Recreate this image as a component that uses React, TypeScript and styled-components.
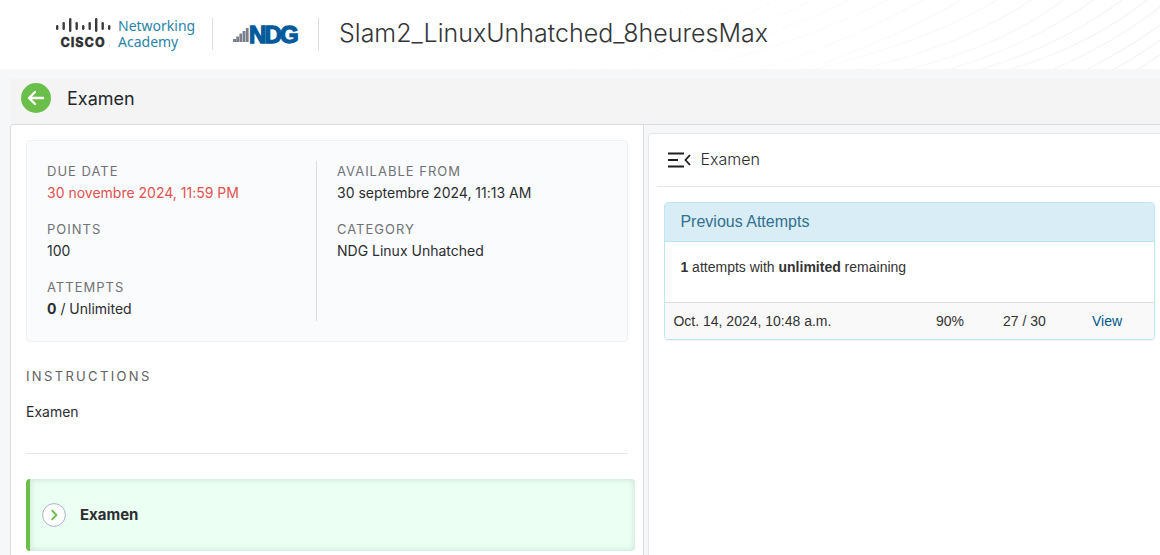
import React from "react";
import styled, { createGlobalStyle } from "styled-components";

const sans = `Inter, "Liberation Sans", sans-serif`;
const arial = `"Liberation Sans", Arial, sans-serif`;

const GlobalStyle = createGlobalStyle`
  *, *::before, *::after { box-sizing: border-box; }
  html, body { margin: 0; background: #f5f7f9; }
  body {
    font-family: ${sans};
    font-size: 14px;
    font-feature-settings: "calt" 0;
    color: #2b2d31;
  }
  h1, h2, h3, p, dl, dd { margin: 0; }
`;

const Page = styled.div`
  display: flex;
  flex-direction: column;
  min-height: 100vh;
  overflow: hidden;
`;

const Header = styled.header`
  position: relative;
  display: flex;
  align-items: center;
  height: 69px;
  padding: 0 0 2px 55px;
  background: #fff;
  overflow: hidden;
`;

const Waves = styled.svg`
  position: absolute;
  top: 0;
  right: 0;
`;

const BrandLink = styled.a`
  position: relative;
  display: flex;
  align-items: center;
  text-decoration: none;
`;

const AcademyName = styled.span`
  width: 88px;
  margin-left: 6px;
  padding-right: 8px;
  font: 400 14px/16px "Noto Sans", sans-serif;
  color: #2a84a8;
`;

const Separator = styled.span<{ $start: number }>`
  position: relative;
  width: 1px;
  height: 32px;
  margin: 0 20px 0 ${(p) => p.$start}px;
  background: #dcdde0;
`;

const CourseTitle = styled.h1`
  position: relative;
  padding-bottom: 2px;
  font-size: 25px;
  line-height: 32px;
  font-weight: 300;
  color: #343537;
`;

const Main = styled.main`
  display: flex;
  flex-direction: column;
  flex: 1;
  padding: 10px 0 0 10px;
`;

const TitleBar = styled.div`
  display: flex;
  align-items: center;
  gap: 16px;
  height: 45px;
  padding: 0 11px 7px;
  background: #f4f4f4;
`;

const BackButton = styled.button`
  display: flex;
  width: 30px;
  height: 30px;
  padding: 0;
  border: 0;
  border-radius: 50%;
  background: #6abf4b;
  cursor: pointer;
`;

const BarTitle = styled.h2`
  padding-top: 2px;
  font-size: 18px;
  line-height: 24px;
  font-weight: 400;
  color: #24272b;
`;

const Workspace = styled.div`
  display: grid;
  grid-template-columns: 317fr 256fr;
  gap: 4px;
  flex: 1;
  border: solid #dadbdd;
  border-width: 1px 0 0 1px;
  border-top-left-radius: 4px;
  overflow: hidden;
`;

const DetailsPane = styled.section`
  padding: 15px 8px 4px 15px;
  border-right: 1px solid #dadbdd;
  background: #fff;
`;

const Summary = styled.div`
  display: grid;
  grid-template-columns: 270px 1fr;
  margin-right: 7px;
  padding: 20px;
  border: 1px solid #f0f1f3;
  border-radius: 4px;
  background: #fafbfd;
`;

const FactList = styled.dl<{ $ruled?: boolean }>`
  display: flex;
  flex-direction: column;
  gap: 14px;
  height: 160px;
  padding-left: ${(p) => (p.$ruled ? 20 : 0)}px;
  border-right: ${(p) => (p.$ruled ? "0" : "1px solid #dcdde0")};
`;

const FactLabel = styled.dt`
  font-size: 13px;
  line-height: 20px;
  letter-spacing: 1px;
  text-transform: uppercase;
  color: #707276;
`;

const FactValue = styled.dd<{ $late?: boolean }>`
  line-height: 24px;
  color: ${(p) => (p.$late ? "#e0524f" : "#2b2d31")};
`;

const SectionLabel = styled.h3`
  margin-top: 24px;
  font-size: 13px;
  line-height: 20px;
  font-weight: 400;
  letter-spacing: 0.18em;
  text-transform: uppercase;
  color: #5f6165;
`;

const Instructions = styled.p`
  margin: 16px 7px 25px 0;
  padding-bottom: 31px;
  border-bottom: 1px solid #e4e5e7;
  line-height: 20px;
`;

const TaskRow = styled.button`
  display: flex;
  align-items: center;
  gap: 14px;
  width: 100%;
  height: 72px;
  padding: 0 12px;
  border: 0;
  border-left: 4px solid #6abf4b;
  border-radius: 4px;
  background: #ebfff3;
  box-shadow: inset 0 0 6px rgba(60, 100, 90, 0.22);
  font: 700 15px/20px ${sans};
  color: #2b2d31;
  text-align: left;
  cursor: pointer;
`;

const AttemptsPane = styled.section`
  margin-top: 8px;
  border: solid #e4e6e8;
  border-width: 1px 0 0 1px;
  border-top-left-radius: 4px;
  background: #fff;
`;

const PaneHead = styled.div`
  display: flex;
  align-items: center;
  gap: 9px;
  height: 53px;
  margin-left: 8px;
  padding-left: 11px;
  border-bottom: 1px solid #e4e5e7;
`;

const MenuButton = styled.button`
  display: flex;
  padding: 0;
  border: 0;
  background: none;
  cursor: pointer;
`;

const PaneTitle = styled.h2`
  padding-bottom: 2px;
  font-size: 16px;
  line-height: 24px;
  font-weight: 300;
  color: #2b2d31;
`;

const Card = styled.div`
  margin: 15px 5px 0 15px;
  border: 1px solid #bce8f1;
  border-radius: 4px;
  box-shadow: 0 1px 1px rgba(0, 0, 0, 0.05);
  overflow: hidden;
  font-family: ${arial};
  color: #333;
`;

const CardTitle = styled.h3`
  padding: 9px 15px;
  border-bottom: 1px solid #bce8f1;
  background: #d9edf7;
  font-size: 16px;
  line-height: 20px;
  font-weight: 400;
  color: #31708f;
`;

const CardText = styled.p`
  padding: 15px 15px 25px;
  line-height: 20px;
`;

const AttemptTable = styled.table`
  width: 100%;
  table-layout: fixed;
  border-collapse: collapse;
  border-top: 1px solid #ddd;
  background: #f9f9f9;

  td {
    height: 36px;
    padding: 8px;
    line-height: 20px;
    white-space: nowrap;
  }
`;

const Column = styled.col<{ $width?: number }>`
  width: ${(p) => (p.$width ? `${p.$width}px` : "auto")};
`;

const ViewLink = styled.a`
  color: #00568f;
  text-decoration: none;
`;

const ciscoBars = [2, 1, 0, 1, 2, 1, 0, 1, 2];
const barShapes = [
  { y: 1, h: 14 },
  { y: 5, h: 8 },
  { y: 8, h: 5 },
];

const CiscoLogo = () => (
  <svg width="57" height="34" viewBox="0 0 57 34" role="img" aria-label="Cisco">
    {ciscoBars.map((kind, i) => (
      <rect key={i} x={1 + i * 6.5} y={barShapes[kind].y} width="2.4" height={barShapes[kind].h} rx="1.2" fill="#3a3b3e" />
    ))}
    <text x="5.5" y="29.5" fontFamily="Inter, sans-serif" fontSize="12.5" fontWeight="800" letterSpacing="1" fill="#2f3033" stroke="#2f3033" strokeWidth="0.3">
      CISCO
    </text>
    <rect x="54" y="28" width="1" height="1" fill="#bbb" />
  </svg>
);

const NdgLogo = () => (
  <svg width="70" height="36" viewBox="0 -6 70 36" role="img" aria-label="NDG">
    <g fill="#7b7f8b">
      <rect x="0" y="17" width="3" height="3" />
      <rect x="3.2" y="14.5" width="2.8" height="5.5" />
      <rect x="6.4" y="11.5" width="2.8" height="8.5" />
      <rect x="9.6" y="9" width="2.8" height="11" />
      <rect x="12.8" y="6" width="2.8" height="14" />
    </g>
    <text x="16" y="20.5" fontFamily="Liberation Sans, sans-serif" fontSize="24" fontWeight="700" letterSpacing="-1.8" fill="#005a9c" stroke="#005a9c" strokeWidth="1.3">
      NDG
    </text>
  </svg>
);

const wavePaths = [
  "M487 0Q420 34 330 59", "M524 0Q440 47 330 78", "M561 0Q460 58 340 88",
  "M597 0Q520 47 380 77", "M631 0Q555 52 420 78", "M663 0Q597 51 480 76",
  "M693 0Q618 55 500 83", "M722 0Q643 59 530 82", "M747 0Q673 59 560 82",
  "M760 7Q697 56 610 86", "M760 25Q709 62 650 86", "M760 40Q725 66 680 86",
  "M760 55Q741 68 710 86", "M450 0Q390 30 310 52", "M412 0Q350 32 280 54",
  "M375 0Q320 32 250 58", "M338 0Q280 36 225 72", "M300 0Q250 34 195 72",
  "M262 0Q210 34 165 72", "M224 0Q180 34 135 72", "M186 0Q145 34 108 72",
  "M148 0Q112 34 80 72", "M110 0Q80 34 52 72",
];

const HeaderWaves = () => (
  <Waves width="760" height="69" viewBox="0 0 760 69" aria-hidden="true">
    <defs>
      <linearGradient id="wave-fade" gradientUnits="userSpaceOnUse" x1="0" y1="0" x2="760" y2="0">
        <stop offset="0" stopColor="#fff" />
        <stop offset="0.58" stopColor="#fbfbfb" />
        <stop offset="1" stopColor="#f4f4f5" />
      </linearGradient>
    </defs>
    <g fill="none" stroke="url(#wave-fade)" strokeWidth="1.3">
      {wavePaths.map((d) => (
        <path key={d} d={d} />
      ))}
    </g>
  </Waves>
);

const ArrowIcon = () => (
  <svg width="30" height="30" viewBox="0 0 30 30" fill="none" stroke="#fff" strokeWidth="2.4" strokeLinecap="round" strokeLinejoin="round" aria-hidden="true">
    <path d="M22 15H8.5M14 9L8 15L14 21" />
  </svg>
);

const CollapseIcon = () => (
  <svg width="23" height="16" viewBox="0 0 23 16" fill="none" stroke="#1d1e20" strokeWidth="1.8" aria-hidden="true">
    <path d="M0 1.5H16M0 8H10M0 14.5H16M22 3L17.5 8L22 13" />
  </svg>
);

const ChevronBadge = () => (
  <svg width="24" height="24" viewBox="0 0 24 24" fill="none" aria-hidden="true">
    <circle cx="12" cy="12" r="11.4" fill="#fff" stroke="#a9b3c4" />
    <path d="M10.2 7.6L14.4 12L10.2 16.4" stroke="#6abf4b" strokeWidth="1.9" strokeLinecap="round" strokeLinejoin="round" />
  </svg>
);

const Fact = ({ label, late, children }: { label: string; late?: boolean; children: React.ReactNode }) => (
  <div>
    <FactLabel>{label}</FactLabel>
    <FactValue $late={late}>{children}</FactValue>
  </div>
);

export default function App() {
  return (
    <Page>
      <GlobalStyle />
      <Header>
        <HeaderWaves />
        <BrandLink href="#academy">
          <CiscoLogo />
          <AcademyName>Networking Academy</AcademyName>
        </BrandLink>
        <Separator $start={6} />
        <BrandLink href="#ndg" aria-label="NDG">
          <NdgLogo />
        </BrandLink>
        <Separator $start={15} />
        <CourseTitle>Slam2_LinuxUnhatched_8heuresMax</CourseTitle>
      </Header>
      <Main>
        <TitleBar>
          <BackButton type="button" aria-label="Back">
            <ArrowIcon />
          </BackButton>
          <BarTitle>Examen</BarTitle>
        </TitleBar>
        <Workspace>
          <DetailsPane>
            <Summary>
              <FactList>
                <Fact label="Due date" late>30 novembre 2024, 11:59 PM</Fact>
                <Fact label="Points">100</Fact>
                <Fact label="Attempts"><b>0</b> / Unlimited</Fact>
              </FactList>
              <FactList $ruled>
                <Fact label="Available from">30 septembre 2024, 11:13 AM</Fact>
                <Fact label="Category">NDG Linux Unhatched</Fact>
              </FactList>
            </Summary>
            <SectionLabel>Instructions</SectionLabel>
            <Instructions>Examen</Instructions>
            <TaskRow type="button">
              <ChevronBadge />
              Examen
            </TaskRow>
          </DetailsPane>
          <AttemptsPane>
            <PaneHead>
              <MenuButton type="button" aria-label="Collapse menu">
                <CollapseIcon />
              </MenuButton>
              <PaneTitle>Examen</PaneTitle>
            </PaneHead>
            <Card>
              <CardTitle>Previous Attempts</CardTitle>
              <CardText>
                <b>1</b> attempts with <b>unlimited</b> remaining
              </CardText>
              <AttemptTable>
                <colgroup>
                  <Column />
                  <Column $width={67} />
                  <Column $width={89} />
                  <Column $width={70} />
                </colgroup>
                <tbody>
                  <tr>
                    <td>Oct. 14, 2024, 10:48 a.m.</td>
                    <td>90%</td>
                    <td>27 / 30</td>
                    <td><ViewLink href="#view">View</ViewLink></td>
                  </tr>
                </tbody>
              </AttemptTable>
            </Card>
          </AttemptsPane>
        </Workspace>
      </Main>
    </Page>
  );
}
